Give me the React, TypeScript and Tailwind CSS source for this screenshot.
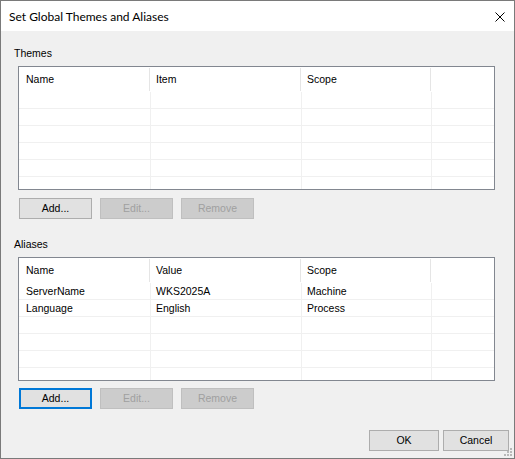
import React from "react";

const HeaderCell = ({ w, pl, text }: { w: string; pl: string; text: string }) => (
  <div className={`flex ${w} shrink-0`}>
    <div className={`flex-1 ${pl} pt-[6px] leading-[13px]`}>{text}</div>
    <div className="w-[1px] my-[1px] bg-[#e5e5e5]" />
  </div>
);

type Row = [string, string, string];

const ListBoxWithHeaders = ({ rows, second }: { rows: Row[]; second: string }) => {
  const all: Row[] = [...rows];
  while (all.length < 7) all.push(["", "", ""]);
  return (
    <div className="ml-[17px] w-[477px] h-[124px] border border-[#828790] bg-white flex flex-col overflow-hidden">
      <div className="flex h-[25px] shrink-0">
        <HeaderCell w="w-[131px]" pl="pl-[7px]" text="Name" />
        <HeaderCell w="w-[151px]" pl="pl-[6px]" text={second} />
        <HeaderCell w="w-[130px]" pl="pl-[6px]" text="Scope" />
        <div className="flex-1" />
      </div>
      <div className="flex flex-col overflow-hidden">
        {all.map((r, i) => (
          <div key={i} className="flex h-[17px] shrink-0 border-b border-[#f0f0f0]">
            <div className="w-[132px] shrink-0 border-r border-[#f0f0f0] pl-[7px] leading-[16px] whitespace-nowrap">{r[0]}</div>
            <div className="w-[151px] shrink-0 border-r border-[#f0f0f0] pl-[5px] leading-[16px] whitespace-nowrap">{r[1]}</div>
            <div className="w-[130px] shrink-0 border-r border-[#f0f0f0] pl-[5px] leading-[16px] whitespace-nowrap">{r[2]}</div>
            <div className="flex-1" />
          </div>
        ))}
      </div>
    </div>
  );
};

const Btn = ({ label, disabled, focused, w = "w-[73px]" }: { label: string; disabled?: boolean; focused?: boolean; w?: string }) => {
  const base = `${w} h-[21px] flex items-center justify-center leading-[13px] shrink-0`;
  if (disabled)
    return <div className={`${base} bg-[#cccccc] border border-[#bfbfbf] text-[#a0a0a0]`}>{label}</div>;
  if (focused)
    return <div className={`${base} bg-[#e1e1e1] border-2 border-[#0078d7] text-black`}>{label}</div>;
  return <div className={`${base} bg-[#e1e1e1] border border-[#adadad] text-black`}>{label}</div>;
};

export default function App() {
  return (
    <div className="relative w-[515px] h-[459px] border border-[#7a7a7a] bg-[#f0f0f0] flex flex-col font-['Liberation_Sans',sans-serif] text-[10.5px] text-black">
      <div className="h-[30px] shrink-0 bg-white flex items-center justify-between pl-[8px] pr-[9px]">
        <div className="font-['Lato',sans-serif] text-[12px] leading-[16px] pt-[1px]">Set Global Themes and Aliases</div>
        <svg width="10" height="10" viewBox="0 0 10 10" className="mt-[1px]">
          <path d="M0.5 0.5 L9.5 9.5 M9.5 0.5 L0.5 9.5" stroke="#000" strokeWidth="1" />
        </svg>
      </div>
      <div className="flex-1 flex flex-col pt-[16px]">
        <div className="ml-[13px] h-[13px] leading-[13px]">Themes</div>
        <div className="mt-[6px]">
          <ListBoxWithHeaders rows={[]} second="Item" />
        </div>
        <div className="mt-[8px] ml-[18px] flex gap-[8px]">
          <Btn label="Add..." />
          <Btn label="Edit..." disabled />
          <Btn label="Remove" disabled />
        </div>
        <div className="mt-[19px] ml-[13px] h-[13px] leading-[13px]">Aliases</div>
        <div className="mt-[6px]">
          <ListBoxWithHeaders
            second="Value"
            rows={[
              ["ServerName", "WKS2025A", "Machine"],
              ["Language", "English", "Process"],
            ]}
          />
        </div>
        <div className="mt-[7px] ml-[18px] flex gap-[8px]">
          <Btn label="Add..." focused />
          <Btn label="Edit..." disabled />
          <Btn label="Remove" disabled />
        </div>
        <div className="mt-[21px] flex justify-end gap-[4px] pr-[5px]">
          <Btn label="OK" w="w-[70px]" />
          <Btn label="Cancel" w="w-[66px]" />
        </div>
      </div>
      <svg width="9" height="9" viewBox="0 0 9 9" className="absolute right-[1px] bottom-[1px]">
        <rect x="6" y="0" width="2" height="2" fill="#b8b8b8" />
        <rect x="3" y="3" width="2" height="2" fill="#b8b8b8" />
        <rect x="6" y="3" width="2" height="2" fill="#b8b8b8" />
        <rect x="0" y="6" width="2" height="2" fill="#b8b8b8" />
        <rect x="3" y="6" width="2" height="2" fill="#b8b8b8" />
        <rect x="6" y="6" width="2" height="2" fill="#b8b8b8" />
      </svg>
    </div>
  );
}
